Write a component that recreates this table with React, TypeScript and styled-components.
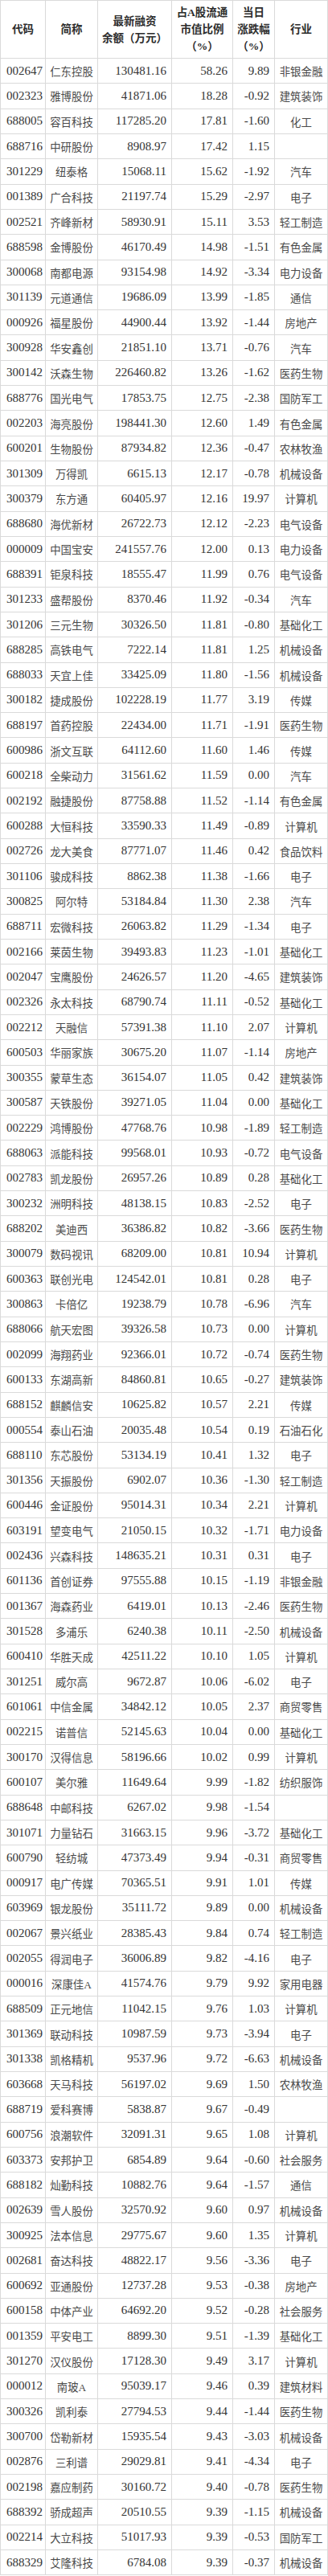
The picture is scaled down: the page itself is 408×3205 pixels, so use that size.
import React from 'react';
import styled, { createGlobalStyle } from 'styled-components';

const GlobalStyle = createGlobalStyle`
  html, body { margin: 0; padding: 0; background: #fff; }
  body { font-family: "Liberation Serif", "Noto Sans CJK SC", serif; }
`;

const COLS = '57px 65px 92px 76px 52px 66px';
const LINE = '#dadada';

const Sheet = styled.div`
  width: 408px;
  border-top: 1px solid ${LINE};
  box-sizing: border-box;
`;

const HeadRow = styled.div`
  display: grid;
  grid-template-columns: ${COLS};
  height: 72px;
  box-sizing: border-box;
  border-bottom: 1px solid ${LINE};
`;

const HeadCell = styled.div`
  display: flex;
  align-items: center;
  justify-content: center;
  text-align: center;
  white-space: pre-line;
  box-sizing: border-box;
  border-right: 1px solid ${LINE};
  font-family: "Liberation Serif", "Noto Sans CJK SC", serif;
  font-weight: 700;
  font-size: 13.5px;
  line-height: 21px;
  color: #2c2c2c;
  &:first-child { border-left: 1px solid ${LINE}; }
`;

const Row = styled.div`
  display: grid;
  grid-template-columns: ${COLS};
  height: 31.32px;
  box-sizing: border-box;
  border-bottom: 1px solid ${LINE};
`;

const Cell = styled.div<{ $align: 'left' | 'center' | 'right'; $text?: boolean }>`
  display: flex;
  align-items: center;
  justify-content: ${(p) => (p.$align === 'left' ? 'flex-start' : p.$align === 'right' ? 'flex-end' : 'center')};
  padding: ${(p) => (p.$align === 'left' ? '0 0 0 7px' : p.$align === 'right' ? '0 6px 0 0' : '0')};
  box-sizing: border-box;
  border-right: 1px solid ${LINE};
  white-space: nowrap;
  overflow: hidden;
  font-size: ${(p) => (p.$text ? '13.4px' : '15px')};
  color: ${(p) => (p.$text ? '#4a4a4a' : '#333')};
  &:first-child { border-left: 1px solid ${LINE}; }
`;

const RAW = `002647 仁东控股 130481.16 58.26 9.89 非银金融
002323 雅博股份 41871.06 18.28 -0.92 建筑装饰
688005 容百科技 117285.20 17.81 -1.60 化工
688716 中研股份 8908.97 17.42 1.15
301229 纽泰格 15068.11 15.62 -1.92 汽车
001389 广合科技 21197.74 15.29 -2.97 电子
002521 齐峰新材 58930.91 15.11 3.53 轻工制造
688598 金博股份 46170.49 14.98 -1.51 有色金属
300068 南都电源 93154.98 14.92 -3.34 电力设备
301139 元道通信 19686.09 13.99 -1.85 通信
000926 福星股份 44900.44 13.92 -1.44 房地产
300928 华安鑫创 21851.10 13.71 -0.76 汽车
300142 沃森生物 226460.82 13.26 -1.62 医药生物
688776 国光电气 17853.75 12.75 -2.38 国防军工
002203 海亮股份 198441.30 12.60 1.49 有色金属
600201 生物股份 87934.82 12.36 -0.47 农林牧渔
301309 万得凯 6615.13 12.17 -0.78 机械设备
300379 东方通 60405.97 12.16 19.97 计算机
688680 海优新材 26722.73 12.12 -2.23 电气设备
000009 中国宝安 241557.76 12.00 0.13 电力设备
688391 钜泉科技 18555.47 11.99 0.76 电气设备
301233 盛帮股份 8370.46 11.92 -0.34 汽车
301206 三元生物 30326.50 11.81 -0.80 基础化工
688285 高铁电气 7222.14 11.81 1.25 机械设备
688033 天宜上佳 33425.09 11.80 -1.56 机械设备
300182 捷成股份 102228.19 11.77 3.19 传媒
688197 首药控股 22434.00 11.71 -1.91 医药生物
600986 浙文互联 64112.60 11.60 1.46 传媒
600218 全柴动力 31561.62 11.59 0.00 汽车
002192 融捷股份 87758.88 11.52 -1.14 有色金属
600288 大恒科技 33590.33 11.49 -0.89 计算机
002726 龙大美食 87771.07 11.46 0.42 食品饮料
301106 骏成科技 8862.38 11.38 -1.66 电子
300825 阿尔特 53184.84 11.30 2.38 汽车
688711 宏微科技 26063.82 11.29 -1.34 电子
002166 莱茵生物 39493.83 11.23 -1.01 基础化工
002047 宝鹰股份 24626.57 11.20 -4.65 建筑装饰
002326 永太科技 68790.74 11.11 -0.52 基础化工
002212 天融信 57391.38 11.10 2.07 计算机
600503 华丽家族 30675.20 11.07 -1.14 房地产
300355 蒙草生态 36154.07 11.05 0.42 建筑装饰
300587 天铁股份 39271.05 11.04 0.00 基础化工
002229 鸿博股份 47768.76 10.98 -1.89 轻工制造
688063 派能科技 99568.01 10.93 -0.72 电气设备
002783 凯龙股份 26957.26 10.89 0.28 基础化工
300232 洲明科技 48138.15 10.83 -2.52 电子
688202 美迪西 36386.82 10.82 -3.66 医药生物
300079 数码视讯 68209.00 10.81 10.94 计算机
600363 联创光电 124542.01 10.81 0.28 电子
300863 卡倍亿 19238.79 10.78 -6.96 汽车
688066 航天宏图 39326.58 10.73 0.00 计算机
002099 海翔药业 92366.01 10.72 -0.74 医药生物
600133 东湖高新 84860.81 10.65 -0.27 建筑装饰
688152 麒麟信安 10625.82 10.57 2.21 传媒
000554 泰山石油 20035.48 10.54 0.19 石油石化
688110 东芯股份 53134.19 10.41 1.32 电子
301356 天振股份 6902.07 10.36 -1.30 轻工制造
600446 金证股份 95014.31 10.34 2.21 计算机
603191 望变电气 21050.15 10.32 -1.71 电力设备
002436 兴森科技 148635.21 10.31 0.31 电子
601136 首创证券 97555.88 10.15 -1.19 非银金融
001367 海森药业 6419.01 10.13 -2.46 医药生物
301528 多浦乐 6240.38 10.11 -2.50 机械设备
600410 华胜天成 42511.22 10.10 1.05 计算机
301251 威尔高 9672.87 10.06 -6.02 电子
601061 中信金属 34842.12 10.05 2.37 商贸零售
002215 诺普信 52145.63 10.04 0.00 基础化工
300170 汉得信息 58196.66 10.02 0.99 计算机
600107 美尔雅 11649.64 9.99 -1.82 纺织服饰
688648 中邮科技 6267.02 9.98 -1.54
301071 力量钻石 31663.15 9.96 -3.72 基础化工
600790 轻纺城 47373.49 9.94 -0.31 商贸零售
000917 电广传媒 70365.51 9.91 1.01 传媒
603969 银龙股份 35111.72 9.89 0.00 机械设备
002067 景兴纸业 28385.43 9.84 0.74 轻工制造
002055 得润电子 36006.89 9.82 -4.16 电子
000016 深康佳A 41574.76 9.79 9.92 家用电器
688509 正元地信 11042.15 9.76 1.03 计算机
301369 联动科技 10987.59 9.73 -3.94 电子
301338 凯格精机 9537.96 9.72 -6.63 机械设备
603668 天马科技 56197.02 9.69 1.50 农林牧渔
688719 爱科赛博 5838.87 9.67 -0.49
600756 浪潮软件 32091.31 9.65 1.08 计算机
603373 安邦护卫 6854.89 9.64 -0.60 社会服务
688182 灿勤科技 10882.76 9.64 -1.57 通信
002639 雪人股份 32570.92 9.60 0.97 机械设备
300925 法本信息 29775.67 9.60 1.35 计算机
002681 奋达科技 48822.17 9.56 -3.36 电子
600692 亚通股份 12737.28 9.53 -0.38 房地产
600158 中体产业 64692.20 9.52 -0.28 社会服务
001359 平安电工 8899.30 9.51 -1.39 基础化工
301270 汉仪股份 17128.30 9.49 3.17 计算机
000012 南玻A 95039.17 9.46 0.39 建筑材料
300326 凯利泰 27794.53 9.44 -1.44 医药生物
300700 岱勒新材 15935.54 9.43 -3.03 机械设备
002876 三利谱 29029.81 9.41 -4.34 电子
002198 嘉应制药 30160.72 9.40 -0.78 医药生物
688392 骄成超声 20510.55 9.39 -1.15 机械设备
002214 大立科技 51017.93 9.39 -0.53 国防军工
688329 艾隆科技 6784.08 9.39 -0.37 机械设备`;

const rows = RAW.split('\n').map((line) => {
  const [code, name, balance, ratio, change, industry = ''] = line.trim().split(/\s+/);
  return { code, name, balance, ratio, change, industry };
});

const headers = ['代码', '简称', '最新融资\n余额（万元）', '占A股流通\n市值比例\n（%）', '当日\n涨跌幅\n（%）', '行业'];

export default function App() {
  return (
    <>
      <GlobalStyle />
      <Sheet>
        <HeadRow>
          {headers.map((h) => (
            <HeadCell key={h}>{h}</HeadCell>
          ))}
        </HeadRow>
        {rows.map((r) => (
          <Row key={r.code}>
            <Cell $align="left">{r.code}</Cell>
            <Cell $align="center" $text>{r.name}</Cell>
            <Cell $align="right">{r.balance}</Cell>
            <Cell $align="right">{r.ratio}</Cell>
            <Cell $align="right">{r.change}</Cell>
            <Cell $align="center" $text>{r.industry}</Cell>
          </Row>
        ))}
      </Sheet>
    </>
  );
}
